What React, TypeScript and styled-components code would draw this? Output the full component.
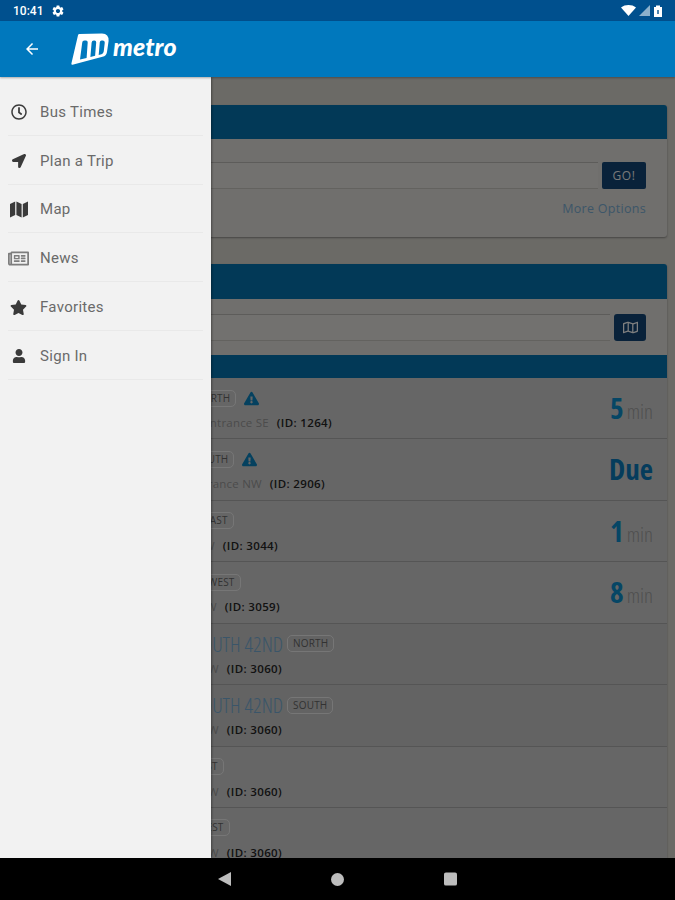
import React from "react";
import styled, { createGlobalStyle } from "styled-components";
import {
  FaRegClock,
  FaLocationArrow,
  FaRegNewspaper,
  FaStar,
  FaUser,
  FaRegMap,
  FaExclamationTriangle,
} from "react-icons/fa";
import { MdArrowBack, MdSettings } from "react-icons/md";

const Global = createGlobalStyle`
  html, body { margin: 0; padding: 0; background: #000; }
  body { font-family: "Open Sans", "Liberation Sans", sans-serif; }
  * { box-sizing: border-box; }
`;

const Screen = styled.div`
  width: 675px;
  height: 900px;
  display: flex;
  flex-direction: column;
  overflow: hidden;
`;

const StatusBar = styled.div`
  height: 21px;
  flex: none;
  background: #00508e;
  display: flex;
  align-items: center;
  padding: 0 11px 0 13px;
  color: #fff;
  font: 500 12px Roboto, sans-serif;
`;

const Clock = styled.span`
  margin-right: 8px;
`;

const StatusRight = styled.div`
  margin-left: auto;
  display: flex;
  align-items: center;
  gap: 2px;
`;

const AppBar = styled.div`
  height: 56px;
  flex: none;
  background: #0078bd;
  display: flex;
  align-items: center;
  padding-left: 23px;
  color: #fff;
  position: relative;
  z-index: 3;
  box-shadow: 0 1px 2px rgba(0, 0, 0, 0.3);
`;

const Logo = styled.div`
  display: flex;
  align-items: center;
  margin-left: 30px;
  gap: 4px;
`;

const LogoWord = styled.span`
  font: italic 900 25px Lato, sans-serif;
  letter-spacing: 0.1px;
  color: #fff;
  position: relative;
  top: -3px;
`;

const Body = styled.div`
  flex: 1;
  position: relative;
  overflow: hidden;
  background: #c3c1ba;
  padding: 28px 8px 0;
`;

const Card = styled.section`
  background: #cccac6;
  border-radius: 3px;
  box-shadow: 0 1px 2px rgba(0, 0, 0, 0.35);
  margin-bottom: 27px;
`;

const CardHeader = styled.div<{ $height: number }>`
  height: ${(p) => p.$height}px;
  background: #04699f;
  border-radius: 3px 3px 0 0;
`;

const SearchBody = styled.div`
  height: 98px;
  padding: 23px 21px 0 12px;
`;

const InputRow = styled.div`
  display: flex;
  align-items: stretch;
  gap: 4px;
  height: 27px;
`;

const Input = styled.div`
  flex: 1;
  border-top: 1px solid #aaa8a4;
  border-bottom: 1px solid #b4b2ae;
  background: #d0cecb;
`;

const GoButton = styled.button`
  width: 44px;
  border: 0;
  padding: 0;
  background: #123f6b;
  border-radius: 2px;
  color: #dcdcdc;
  font: 500 12px "Open Sans", sans-serif;
  letter-spacing: 0.6px;
`;

const MapButton = styled.button`
  width: 32px;
  border: 0;
  padding: 0;
  background: #123f6b;
  border-radius: 3px;
  color: #e8e8e8;
  display: flex;
  align-items: center;
  justify-content: center;
  font-size: 15px;
`;

const MoreLink = styled.div`
  margin-top: 12px;
  text-align: right;
  font: 400 12.5px/16px "Open Sans", sans-serif;
  color: #6f9dc0;
  letter-spacing: 0.3px;
`;

const StopsBody = styled.div`
  padding: 15px 21px 14px 12px;
`;

const SubHeader = styled.div`
  height: 23px;
  background: #04699f;
`;

const Row = styled.div<{ $dark?: boolean }>`
  height: 61.43px;
  background: ${(p) => (p.$dark ? "#b4b4b4" : "#bbbbbb")};
  border-bottom: 1.5px solid #9c9c9c;
  display: flex;
  justify-content: space-between;
  padding: 10px 14px 0 12px;
`;

const RowMain = styled.div`
  display: flex;
  flex-direction: column;
`;

const TitleLine = styled.div`
  display: flex;
  align-items: center;
  gap: 4px;
  height: 20px;
`;

const Title = styled.div<{ $width: number }>`
  width: ${(p) => p.$width}px;
  text-align: right;
  white-space: nowrap;
  font: 300 21px "Open Sans", sans-serif;
  font-stretch: 75%;
  color: #6a9cc0;
`;

const Tag = styled.span`
  height: 17px;
  padding: 0 5px;
  border: 1px solid #d8d8d8;
  border-radius: 5px;
  font: 400 10px/15px "Open Sans", sans-serif;
  color: #5c5c5c;
  letter-spacing: 0.2px;
`;

const Warn = styled.span`
  color: #0a77ad;
  font-size: 15px;
  line-height: 15px;
  display: flex;
  margin-left: 4px;
`;

const SubLine = styled.div<{ $width: number }>`
  width: ${(p) => p.$width}px;
  margin-top: 7px;
  text-align: right;
  white-space: nowrap;
  font: 400 11.5px/16px "Open Sans", sans-serif;
  color: #8a8a8a;
  letter-spacing: 0.2px;
`;

const StopId = styled.b`
  font-weight: 600;
  color: #222;
  margin-left: 8px;
  letter-spacing: 0.35px;
`;

const Time = styled.div`
  display: flex;
  align-items: baseline;
  gap: 3px;
  padding-top: 2px;
`;

const TimeValue = styled.span`
  font: 700 29px/36px "Open Sans", sans-serif;
  font-stretch: 75%;
  color: #0b80b8;
`;

const DueValue = styled(TimeValue)`
  color: #0a6ea8;
`;

const TimeUnit = styled.span`
  font: 300 21px/36px "Open Sans", sans-serif;
  font-stretch: 75%;
  color: #909090;
`;

const Scrim = styled.div`
  position: absolute;
  inset: 0;
  background: rgba(0, 0, 0, 0.45);
`;

const Drawer = styled.nav`
  position: absolute;
  top: 0;
  bottom: 0;
  left: 0;
  width: 211px;
  background: #f2f2f2;
  box-shadow: 1px 0 2px rgba(0, 0, 0, 0.35);
  padding: 10px 8px 0;
`;

const MenuItem = styled.div`
  height: 48.8px;
  display: flex;
  align-items: center;
  gap: 11px;
  padding-top: 2px;
  border-bottom: 1px solid #e9e9e9;
  font: 400 15px Roboto, sans-serif;
  letter-spacing: 0.3px;
  color: #6a6a6a;
`;

const MenuIcon = styled.span<{ $muted?: boolean }>`
  width: 21px;
  display: flex;
  justify-content: center;
  color: ${(p) => (p.$muted ? "#7d7d7d" : "#3a3a3a")};
  font-size: 16px;
`;

const NavBar = styled.div`
  height: 42px;
  flex: none;
  background: #000;
  display: flex;
  align-items: center;
  justify-content: center;
  gap: 100px;
`;

const NavSlot = styled.div`
  width: 13px;
  height: 14px;
  display: flex;
  align-items: center;
  justify-content: center;
`;

const FoldedMap = () => (
  <svg width="18" height="17" viewBox="0 0 18 17">
    <path
      d="M0 3L5.2 0.5V14L0 16.5ZM6.4 0.5L11.6 3V16.5L6.4 14ZM12.8 3L18 0.5V14L12.8 16.5Z"
      fill="#3a3a3a"
    />
  </svg>
);

const menu = [
  { label: "Bus Times", icon: <FaRegClock /> },
  { label: "Plan a Trip", icon: <FaLocationArrow size={14} /> },
  { label: "Map", icon: <FoldedMap /> },
  { label: "News", icon: <FaRegNewspaper size={21} />, muted: true },
  { label: "Favorites", icon: <FaStar size={17} /> },
  { label: "Sign In", icon: <FaUser size={14} /> },
];

const stops = [
  { title: "CENTER", tw: 165, tag: "NORTH", warn: true, place: "Center Entrance SE", id: "1264", sw: 312, time: "5" },
  { title: "CENTER", tw: 164, tag: "SOUTH", warn: true, place: "Entrance NW", id: "2906", sw: 305, time: "Due" },
  { title: "DODGE", tw: 174, tag: "EAST", place: "S 42nd W", id: "3044", sw: 258, time: "1" },
  { title: "DODGE", tw: 178, tag: "WEST", place: "S 42nd NW", id: "3059", sw: 260, time: "8" },
  { title: "SOUTH 42ND", tw: 263, tag: "NORTH", place: "S 42nd NW", id: "3060", sw: 262, dark: true },
  { title: "SOUTH 42ND", tw: 263, tag: "SOUTH", place: "S 42nd NW", id: "3060", sw: 262, dark: true },
  { title: "DODGE", tw: 164, tag: "EAST", place: "S 42nd NW", id: "3060", sw: 262 },
  { title: "DODGE", tw: 167, tag: "WEST", place: "S 42nd NW", id: "3060", sw: 262 },
];

export default function App() {
  return (
    <Screen>
      <Global />
      <StatusBar>
        <Clock>10:41</Clock>
        <MdSettings size={14} />
        <StatusRight>
          <svg width="15" height="11" viewBox="0 0 15 11">
            <path d="M0 2.5C4 -0.8 11 -0.8 15 2.5L7.5 11Z" fill="#fff" />
          </svg>
          <svg width="12" height="11" viewBox="0 0 12 11">
            <path d="M12 0V11H1Z" fill="#fff" fillOpacity="0.55" />
          </svg>
          <svg width="12" height="12" viewBox="0 0 12 12">
            <path d="M2 2H4V0.5H8V2H10V12H2Z" fill="#fff" />
            <rect x="5.3" y="5" width="1.4" height="4" fill="#00508e" />
          </svg>
        </StatusRight>
      </StatusBar>
      <AppBar>
        <MdArrowBack size={18} />
        <Logo>
          <svg width="38" height="33" viewBox="0 0 38 33">
            <path
              fillRule="evenodd"
              fill="#fff"
              d="M7 2.2Q7.2 1 8.5 1L31 0.4Q38 0.4 37.6 8L36 19Q35.4 23 31.5 23.8L1.5 31.8Q0.2 32 0.4 30.6ZM11.2 9.8Q11.3 7.6 13.5 7.6H15Q16.8 7.6 16.7 9.6L15.6 24.9L9 26.6ZM20.6 9.8Q20.8 7.5 22.8 7.5H23.5Q25.3 7.5 25.2 9.5L24.1 22.8L19.4 24ZM28.8 9.3Q29 7.4 30.6 7.4H31.6Q34 7.4 33.7 10.2L32.7 18.5Q32.4 20.6 30.5 21.2L27.7 21.9Z"
            />
          </svg>
          <LogoWord>metro</LogoWord>
        </Logo>
      </AppBar>
      <Body>
        <Card>
          <CardHeader $height={34} />
          <SearchBody>
            <InputRow>
              <Input />
              <GoButton>GO!</GoButton>
            </InputRow>
            <MoreLink>More Options</MoreLink>
          </SearchBody>
        </Card>
        <Card>
          <CardHeader $height={35} />
          <StopsBody>
            <InputRow>
              <Input />
              <MapButton>
                <FaRegMap />
              </MapButton>
            </InputRow>
          </StopsBody>
          <SubHeader />
          {stops.map((s, i) => (
            <Row key={i} $dark={s.dark}>
              <RowMain>
                <TitleLine>
                  <Title $width={s.tw}>{s.title}</Title>
                  <Tag>{s.tag}</Tag>
                  {s.warn && (
                    <Warn>
                      <FaExclamationTriangle />
                    </Warn>
                  )}
                </TitleLine>
                <SubLine $width={s.sw}>
                  {s.place}
                  <StopId>(ID: {s.id})</StopId>
                </SubLine>
              </RowMain>
              {s.time && (
                <Time>
                  {s.time === "Due" ? (
                    <DueValue>Due</DueValue>
                  ) : (
                    <>
                      <TimeValue>{s.time}</TimeValue>
                      <TimeUnit>min</TimeUnit>
                    </>
                  )}
                </Time>
              )}
            </Row>
          ))}
        </Card>
        <Scrim />
        <Drawer>
          {menu.map((m) => (
            <MenuItem key={m.label}>
              <MenuIcon $muted={m.muted}>{m.icon}</MenuIcon>
              {m.label}
            </MenuItem>
          ))}
        </Drawer>
      </Body>
      <NavBar>
        <NavSlot>
          <svg width="13" height="14" viewBox="0 0 13 14">
            <path d="M13 0V14L0 7Z" fill="#bdbdbd" />
          </svg>
        </NavSlot>
        <NavSlot>
          <svg width="13" height="13" viewBox="0 0 13 13">
            <circle cx="6.5" cy="6.5" r="6.5" fill="#bdbdbd" />
          </svg>
        </NavSlot>
        <NavSlot>
          <svg width="14" height="14" viewBox="0 0 14 14">
            <rect width="14" height="14" rx="2" fill="#bdbdbd" />
          </svg>
        </NavSlot>
      </NavBar>
    </Screen>
  );
}
